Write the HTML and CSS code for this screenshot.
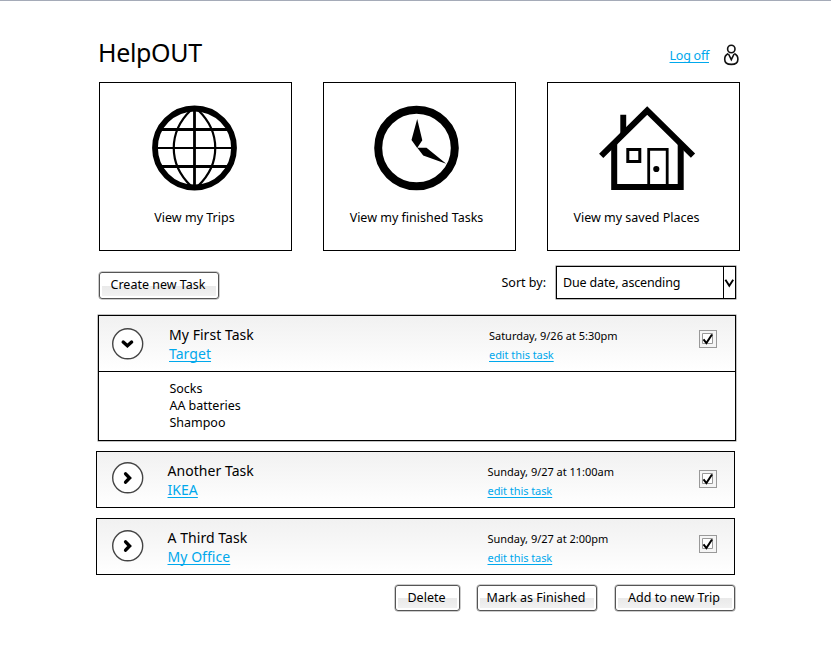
FILE: index.html
```html
<!DOCTYPE html>
<html lang="en">
<head>
<meta charset="utf-8">
<title>HelpOUT</title>
<link rel="stylesheet" href="styles.css">
</head>
<body>
<header class="top">
  <h1>HelpOUT</h1>
  <a class="link logoff" href="#">Log off</a>
  <svg class="user" width="16" height="22" viewBox="0 0 16 22"><g fill="none" stroke="#111" stroke-width="1.6"><circle cx="8.300" cy="5" r="3.700"/><path d="M5.300 9.500C3 10.600 1.700 12.800 1.700 15.200c0 3.400 2 5.200 6.600 5.200s6.600-1.800 6.600-5.200c0-2.400-1.300-4.600-3.600-5.700"/><path d="M5.500 10 8.300 15.600 11.100 10"/></g></svg>
</header>
<nav class="cards">
  <a class="card">
    <svg class="globe" width="86" height="86" viewBox="0 0 86 86"><g fill="none" stroke="#000"><circle cx="42.500" cy="43" r="39.500" stroke-width="5.800"/><path d="M42.500 3v80M9 24.500h68M9 61.500h68" stroke-width="2.800"/><path d="M3 43h80" stroke-width="2"/><path d="M39 5C16 27 16 59 39 81M46 5c23 22 23 54 0 76" stroke-width="2.200"/></g></svg>
    <span class="lbl trips">View my Trips</span>
  </a>
  <a class="card">
    <svg class="clock" width="86" height="86" viewBox="0 0 86 86"><circle cx="42.500" cy="43" r="38.300" fill="none" stroke="#000" stroke-width="8"/><path d="M43.200 14 48.300 35.300 43.200 43 37.500 35ZM43.300 42.800h9.200L72.200 58.800 49.200 50.600Z"/></svg>
    <span class="lbl tasks-lbl">View my finished Tasks</span>
  </a>
  <a class="card">
    <svg class="house" width="98" height="86" viewBox="0 0 98 86"><path d="M22.300 31V9.700h5.900V25"/><path d="M3.200 50.800 49.200 5.500 95 50.700" fill="none" stroke="#000" stroke-width="6"/><path d="M16.200 38v44h66.500V38" fill="none" stroke="#000" stroke-width="6"/><path d="M29.800 44.500h12v12h-12Z" fill="none" stroke="#000" stroke-width="3"/><path d="M50.700 80V44.300h18.500V80" fill="none" stroke="#000" stroke-width="2.800"/><circle cx="58.300" cy="64" r="3.100"/></svg>
    <span class="lbl places">View my saved Places</span>
  </a>
</nav>
<div class="toolbar">
  <button class="btn create">Create new Task</button>
  <span class="sort">Sort by:</span>
  <div class="select"><span>Due date, ascending</span><i><svg width="11" height="10" viewBox="0 0 11 10"><path d="M1.400 1.700 5.300 7.800 9.200 1.700" fill="none" stroke="#000" stroke-width="1.900"/></svg></i></div>
</div>
<main>
  <section class="task open">
    <div class="head">
      <svg class="toggle" width="32" height="32" viewBox="0 0 32 32"><circle cx="15.700" cy="15.800" r="15" fill="#fff" stroke="#444" stroke-width="1.400"/><path d="M11.200 14 15.400 17.700 19.600 14" fill="none" stroke="#000" stroke-width="3.400" stroke-linecap="round"/></svg>
      <div class="name"><span>My First Task</span><a class="link" href="#">Target</a></div>
      <div class="when"><span>Saturday, 9/26 at 5:30pm</span><a class="link" href="#">edit this task</a></div>
      <span class="check"><svg width="16" height="16" viewBox="0 0 16 16"><path d="M2.500 2.500h10v10h-10Z" fill="#fff" stroke="#999"/><path d="M3.500 8.300 6.400 12 12 3.500" fill="none" stroke="#000" stroke-width="2"/></svg></span>
    </div>
    <ul class="items"><li>Socks</li><li>AA batteries</li><li>Shampoo</li></ul>
  </section>
  <section class="task second">
    <div class="head">
      <svg class="toggle" width="32" height="32" viewBox="0 0 32 32"><circle cx="15.700" cy="15.800" r="15" fill="#fff" stroke="#444" stroke-width="1.400"/><path d="M13.600 11.800 17.600 16 13.600 20.200" fill="none" stroke="#000" stroke-width="3.400" stroke-linecap="round"/></svg>
      <div class="name"><span>Another Task</span><a class="link" href="#">IKEA</a></div>
      <div class="when"><span>Sunday, 9/27 at 11:00am</span><a class="link" href="#">edit this task</a></div>
      <span class="check"><svg width="16" height="16" viewBox="0 0 16 16"><path d="M2.500 2.500h10v10h-10Z" fill="#fff" stroke="#999"/><path d="M3.500 8.300 6.400 12 12 3.500" fill="none" stroke="#000" stroke-width="2"/></svg></span>
    </div>
  </section>
  <section class="task third">
    <div class="head">
      <svg class="toggle" width="32" height="32" viewBox="0 0 32 32"><circle cx="15.700" cy="15.800" r="15" fill="#fff" stroke="#444" stroke-width="1.400"/><path d="M13.600 11.800 17.600 16 13.600 20.200" fill="none" stroke="#000" stroke-width="3.400" stroke-linecap="round"/></svg>
      <div class="name"><span>A Third Task</span><a class="link" href="#">My Office</a></div>
      <div class="when"><span>Sunday, 9/27 at 2:00pm</span><a class="link" href="#">edit this task</a></div>
      <span class="check"><svg width="16" height="16" viewBox="0 0 16 16"><path d="M2.500 2.500h10v10h-10Z" fill="#fff" stroke="#999"/><path d="M3.500 8.300 6.400 12 12 3.500" fill="none" stroke="#000" stroke-width="2"/></svg></span>
    </div>
  </section>
</main>
<footer class="actions">
  <button class="btn delete">Delete</button>
  <button class="btn finish">Mark as Finished</button>
  <button class="btn trip">Add to new Trip</button>
</footer>
</body>
</html>
```
FILE: styles.css
```css
* { box-sizing: border-box; }
body { margin: 0; height: 662px; overflow: hidden; border-top: 1px solid #a5abb8; background: #fff; color: #000; font: 12.5px/17px "Noto Sans", sans-serif; white-space: nowrap; }
svg { display: block; flex: none; }
.link { color: #00a8ec; text-decoration: underline; text-decoration-thickness: 1px; text-underline-offset: 2px; text-decoration-skip-ink: none; }
.top { display: flex; width: 739px; height: 81px; padding: 34px 0 0 98px; }
h1 { margin: 0; font-size: 25px; font-weight: 400; line-height: 34px; letter-spacing: -0.35px; flex: 1; }
.logoff { margin: 12px 14px 0 0; letter-spacing: -.25px; }
.user { margin: 9px 0 0; }
.cards { display: flex; gap: 31px; padding-left: 99px; }
.card { width: 193px; height: 169px; border: 1px solid #000; display: flex; flex-direction: column; align-items: center; padding-top: 22px; }
.globe { margin-right: 2px; }
.clock { margin-right: 6px; }
.house { margin-left: 7px; }
.lbl { margin-top: 18px; }
.places { margin-right: 14px; }
.trips { margin-right: 2px; }
.tasks-lbl { margin-right: 6px; }
.toolbar { display: flex; width: 736px; height: 64px; padding: 15px 0 0 99px; align-items: flex-start; }
.btn { height: 27px; padding: 0 2px 3px 0; border: 1px solid #555; border-radius: 3px; font: inherit; color: #000; background: linear-gradient(#fff 0 50%, #e9e9e9 50%, #f3f3f3); box-shadow: inset 0 0 0 2px #fff, 0 0 0 .5px #999; white-space: nowrap; }
.create { width: 120px; margin: 6px auto 0 0; }
.sort { margin: 8px 10px 0 0; }
.select { display: flex; width: 180px; height: 33px; border: 1px solid #000; box-shadow: 0 0 0 .5px #777; }
.select span { flex: 1; padding: 7px 0 0 6px; letter-spacing: -.15px; }
.select i { width: 12px; border-left: 1px solid #000; display: flex; align-items: center; }
main { padding-left: 96px; }
.task { width: 639px; border: 1px solid #000; margin-bottom: 10px; }
.open { width: 638px; height: 126px; margin-left: 2px; box-shadow: 0 0 0 .5px #888; }
.head { display: flex; height: 55px; background: linear-gradient(#f1f1f1, #fff); }
.toggle { margin: 10px 23.5px 0 15px; }
.open .toggle { margin: 12px 25px 0 13px; }
.third .toggle { margin-top: 11px; }
.name, .when { display: flex; flex-direction: column; align-items: flex-start; line-height: 19px; padding-top: 9px; }
.name { width: 320px; font-size: 14px; letter-spacing: .05px; }
.when { width: 212px; font-size: 11px; padding-top: 10px; letter-spacing: -.02px; }
.when .link { letter-spacing: -.07px; }
.check { width: 18px; height: 18px; margin: 18px 0 0 -.5px; border: 1px solid #999; background: #f5f5f5; }
.open .check { margin: 14px 0 0 -2px; }
.third .check { margin-top: 16px; }
.open .head { border-bottom: 1px solid #000; height: 56px; }
.items { list-style: none; margin: 0; padding: 8px 0 0 70.4px; }
.actions { display: flex; width: 735px; justify-content: flex-end; }
.actions .btn { height: 26px; padding-bottom: 2px; }
.delete { width: 65px; margin-right: 17px; }
.finish { width: 120px; margin-right: 18px; }
.trip { width: 120px; }
```
